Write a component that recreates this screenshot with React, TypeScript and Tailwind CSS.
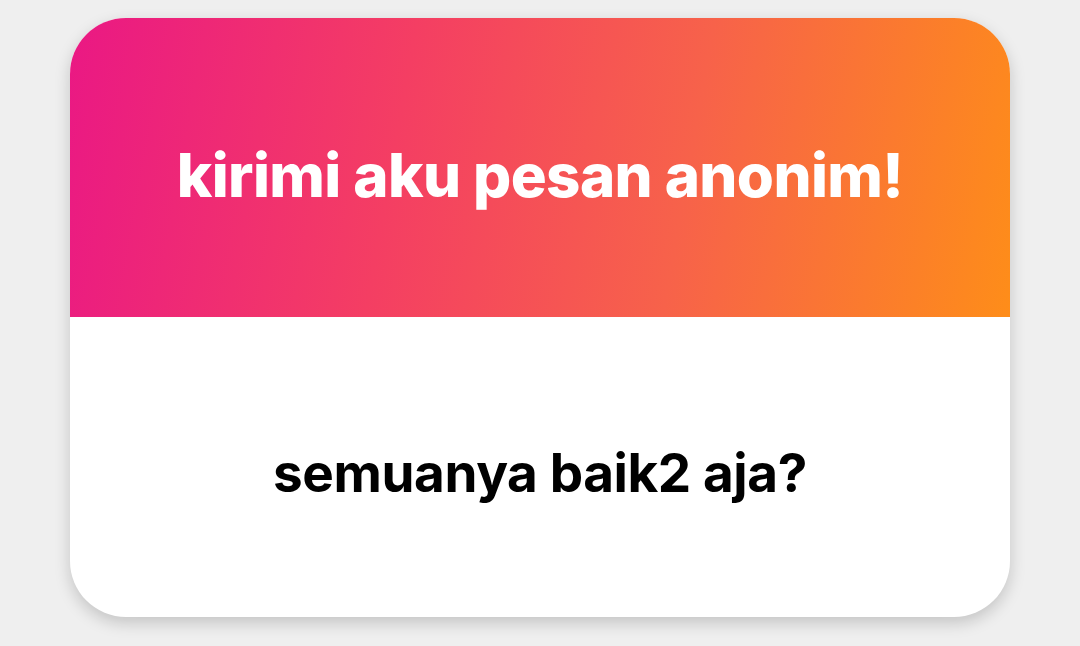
export default function App() {
  return (
    <div className="flex h-[646px] w-[1080px] items-start justify-center bg-[#efefef] pt-[18px] font-['Inter',sans-serif]">
      <div className="flex h-[599px] w-[940px] flex-col overflow-hidden rounded-[56px] bg-white shadow-[0_6px_16px_rgba(0,0,0,0.18)]">
        <div className="flex h-[299px] items-center justify-center bg-[linear-gradient(100deg,#ea1884_0%,#f43e63_35%,#f7624a_65%,#fe8d19_100%)] pt-[14px]">
          <h1 className="text-[60px] font-extrabold tracking-[-0.6px] text-white">
            kirimi aku pesan anonim!
          </h1>
        </div>
        <div className="flex flex-1 items-center justify-center pt-[14px]">
          <p className="text-[53px] font-bold tracking-[-0.4px] text-black">
            semuanya baik2 aja?
          </p>
        </div>
      </div>
    </div>
  );
}
